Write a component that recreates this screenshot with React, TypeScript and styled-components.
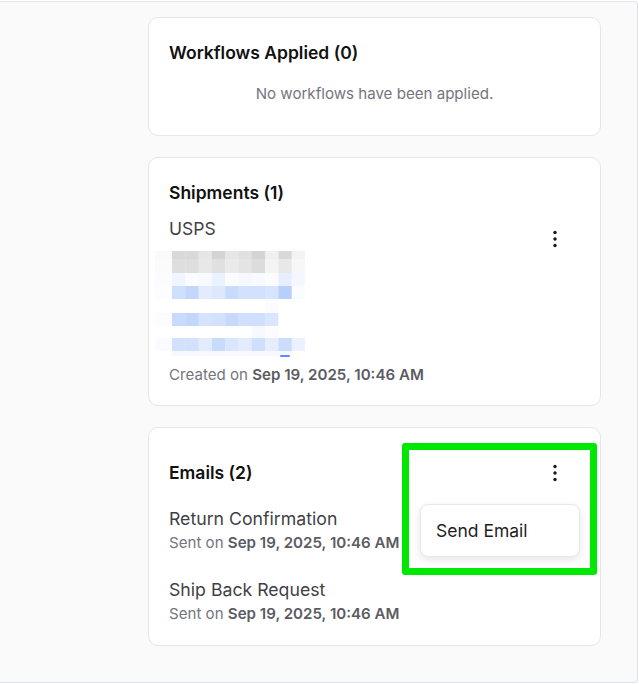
import React from "react";
import styled, { createGlobalStyle } from "styled-components";

const GlobalStyle = createGlobalStyle`
  html, body {
    margin: 0;
    padding: 0;
    background: #ffffff;
  }
  body {
    font-family: Inter, "Noto Sans", "Liberation Sans", sans-serif;
    -webkit-font-smoothing: antialiased;
  }
  * { box-sizing: border-box; }
`;

const Panel = styled.div`
  margin-top: 1px;
  width: 638px;
  height: 682px;
  background: #fafafa;
  border-top: 1px solid #e4e8ee;
  border-right: 1px solid #dde3ec;
  border-bottom: 1px solid #dde3ec;
  border-radius: 0 4px 4px 0;
  padding: 15px 0 0 148px;
  display: flex;
  flex-direction: column;
  gap: 21px;
`;

const Card = styled.section<{ $pb?: number }>`
  position: relative;
  width: 453px;
  background: #ffffff;
  border: 1px solid #e6e6e6;
  border-radius: 10px;
  padding: 23px 29px ${(p) => p.$pb ?? 24}px 20px;
  display: flex;
  flex-direction: column;
`;

const Title = styled.h3`
  margin: 0;
  font-size: 17.5px;
  line-height: 24px;
  font-weight: 600;
  color: #111111;
`;

const Empty = styled.p`
  margin: 19px -9px 7px 0;
  text-align: center;
  font-size: 15.1px;
  line-height: 20px;
  color: #75757e;
`;

const ShipmentRow = styled.div`
  margin-top: 12px;
  display: flex;
  justify-content: space-between;
  align-items: flex-start;
`;

const ShipmentInfo = styled.div`
  display: flex;
  flex-direction: column;
`;

const Carrier = styled.div`
  font-size: 17.5px;
  line-height: 24px;
  color: #3f3f46;
`;

const Pixels = styled.svg`
  display: block;
  margin: 10px 0 0 -14px;
`;

const Meta = styled.div<{ $mt?: number }>`
  margin-top: ${(p) => p.$mt ?? 0}px;
  font-size: 15.1px;
  line-height: 20px;
  color: #75757e;
  b {
    font-weight: 600;
    color: #5b5b63;
  }
`;

const KebabButton = styled.button<{ $mt?: number }>`
  width: 32px;
  height: 32px;
  margin-top: ${(p) => p.$mt ?? 0}px;
  border: none;
  background: transparent;
  padding: 0;
  display: flex;
  align-items: center;
  justify-content: center;
  color: #18181b;
  cursor: pointer;
`;

const Header = styled.div`
  height: 44px;
  display: flex;
  align-items: center;
  justify-content: space-between;
`;

const EmailList = styled.div`
  margin-top: 12px;
  display: flex;
  flex-direction: column;
  gap: 25px;
`;

const EmailItem = styled.div`
  display: flex;
  flex-direction: column;
`;

const EmailName = styled.div`
  font-size: 17.7px;
  line-height: 24px;
  color: #3f3f46;
  margin-bottom: 2px;
`;

const Menu = styled.div`
  position: absolute;
  left: 271px;
  top: 76px;
  width: 160px;
  height: 53px;
  background: #ffffff;
  border: 1px solid #e8e8e8;
  border-radius: 8px;
  box-shadow: 0 3px 8px rgba(0, 0, 0, 0.1);
  display: flex;
  align-items: center;
  padding-left: 15px;
  font-size: 17.5px;
  color: #1f1f23;
  z-index: 2;
`;

const Highlight = styled.div`
  position: absolute;
  left: 253px;
  top: 15px;
  width: 195px;
  height: 132px;
  border: 7px solid #00e800;
  border-radius: 3px;
  pointer-events: none;
  z-index: 3;
`;

const Kebab = () => (
  <svg width="24" height="24" viewBox="0 0 24 24" fill="currentColor">
    <circle cx="12" cy="5.5" r="1.7" />
    <circle cx="12" cy="12" r="1.7" />
    <circle cx="12" cy="18.5" r="1.7" />
  </svg>
);

const rows: { y: number; h: number; colors: string[] }[] = [
  { y: 0, h: 8, colors: ["#fafafa", "#d9d9d9", "#d9d9d9", "#e6e6e6", "#d4d4d4", "#e6e6e6", "#e0e0e0", "#d4d4d4", "#f0f0f0", "#d9d9d9", "#f3f3f3"] },
  { y: 8, h: 14, colors: ["#fbfbfb", "#dedede", "#dedede", "#e8e8e8", "#e0e0e0", "#eaeaea", "#e4e4e4", "#dcdcdc", "#f4f4f4", "#e8e8e8", "#f7f7f7"] },
  { y: 22, h: 13, colors: ["#fbfcff", "#f0f5ff", "#fafcff", "#f8faff", "#ebf2ff", "#fbfcff", "#f6f8ff", "#f8faff", "#fcfcff", "#e7efff", "#f4f7ff"] },
  { y: 35, h: 13, colors: ["#fdfdff", "#cfe0fd", "#c3d7fd", "#e3ecfe", "#dde8fe", "#c9dbfd", "#d2e1fd", "#d2e1fd", "#d7e4fd", "#b7cffd", "#fbfcff"] },
  { y: 48, h: 14, colors: ["#ffffff", "#ffffff", "#ffffff", "#ffffff", "#ffffff", "#ffffff", "#ffffff", "#ffffff", "#fcfcff", "#ffffff", "#ffffff"] },
  { y: 62, h: 13, colors: ["#fbfcff", "#c9dbfd", "#c3d7fd", "#d5e3fd", "#d3e1fd", "#c7d9fd", "#d0dffd", "#d0dffd", "#dae6fd", "#ffffff", "#ffffff"] },
  { y: 75, h: 12, colors: ["#ffffff", "#ffffff", "#ffffff", "#ffffff", "#ffffff", "#ffffff", "#ffffff", "#f6f9ff", "#fcfcff", "#ffffff", "#ffffff"] },
  { y: 87, h: 13, colors: ["#f9fbff", "#d3e1fd", "#d3e1fd", "#e3ecfe", "#c9dbfd", "#dae6fd", "#e3ecfe", "#d0dffd", "#e6eefe", "#cbdcfd", "#ebf1fe"] },
  { y: 100, h: 5, colors: ["#ffffff", "#f5f8ff", "#f5f8ff", "#f7f9ff", "#f5f8ff", "#f7f9ff", "#f7f9ff", "#f5f8ff", "#f7f9ff", "#f5f8ff", "#ffffff"] },
];

const colX = (i: number) => (i === 0 ? 0 : 17 + (i - 1) * 13.3);
const colW = (i: number) => (i === 0 ? 17 : 13.3);

const Mosaic = () => (
  <Pixels width="150" height="106" viewBox="0 0 150 106">
    {rows.map((r, ri) =>
      r.colors.map((c, ci) => (
        <rect key={`${ri}-${ci}`} x={colX(ci)} y={r.y} width={colW(ci) + 0.3} height={r.h} fill={c} />
      ))
    )}
    <rect x="125" y="104" width="10" height="2" rx="1" fill="#5b8ff9" />
  </Pixels>
);

export default function App() {
  return (
    <>
      <GlobalStyle />
      <Panel>
        <Card>
          <Title>Workflows Applied (0)</Title>
          <Empty>No workflows have been applied.</Empty>
        </Card>

        <Card $pb={20}>
          <Title>Shipments (1)</Title>
          <ShipmentRow>
            <ShipmentInfo>
              <Carrier>USPS</Carrier>
              <Mosaic />
              <Meta $mt={8}>
                Created on <b>Sep 19, 2025, 10:46 AM</b>
              </Meta>
            </ShipmentInfo>
            <KebabButton $mt={6} aria-label="More actions">
              <Kebab />
            </KebabButton>
          </ShipmentRow>
        </Card>

        <Card $pb={21}>
          <Header>
            <Title>Emails (2)</Title>
            <KebabButton aria-label="More actions">
              <Kebab />
            </KebabButton>
          </Header>
          <EmailList>
            <EmailItem>
              <EmailName>Return Confirmation</EmailName>
              <Meta>
                Sent on <b>Sep 19, 2025, 10:46 AM</b>
              </Meta>
            </EmailItem>
            <EmailItem>
              <EmailName>Ship Back Request</EmailName>
              <Meta>
                Sent on <b>Sep 19, 2025, 10:46 AM</b>
              </Meta>
            </EmailItem>
          </EmailList>
          <Menu>Send Email</Menu>
          <Highlight />
        </Card>
      </Panel>
    </>
  );
}
